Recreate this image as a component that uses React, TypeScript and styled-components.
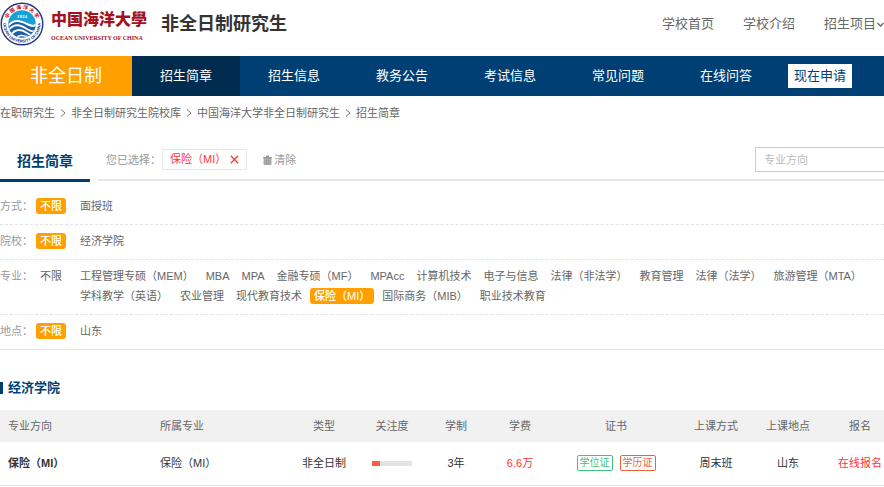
import React from "react";
import styled, { createGlobalStyle, css } from "styled-components";

const GlobalStyle = createGlobalStyle`
  *, *::before, *::after { box-sizing: border-box; }
  body {
    margin: 0;
    background: #fff;
    color: #333;
    font-family: "Liberation Sans", "Noto Sans CJK SC", sans-serif;
    font-size: 11px;
    line-height: 20px;
  }
  a { color: inherit; text-decoration: none; }
  button, input { font: inherit; }
`;

const Page = styled.div`
  width: 100%;
  overflow: hidden;
`;

const Header = styled.header`
  display: flex;
  align-items: center;
  height: 56px;
  padding-bottom: 8px;
`;

const Wordmark = styled.div`
  display: flex;
  flex-direction: column;
  margin-left: 6px;
  color: #a3121f;
  white-space: nowrap;
`;

const SchoolName = styled.span`
  font-size: 16px;
  font-weight: 900;
  line-height: 28px;
`;

const SchoolNameEn = styled.span`
  font-family: "Liberation Serif", serif;
  font-size: 6px;
  font-weight: 700;
  line-height: 8px;
`;

const SiteTitle = styled.h1`
  margin: 0 0 0 14px;
  font-size: 18px;
  font-weight: 700;
  white-space: nowrap;
`;

const TopLinks = styled.nav`
  display: flex;
  gap: 29px;
  margin-left: auto;
  color: #666;
  font-size: 13px;
  white-space: nowrap;
`;

const TopLink = styled.a`
  display: flex;
  align-items: center;
`;

const MainNav = styled.nav`
  display: flex;
  align-items: center;
  height: 40px;
  background: #003f73;
  color: #fff;
  font-size: 13px;
`;

const NavBrand = styled.a`
  width: 132px;
  background: #ff9f00;
  font-size: 18px;
  line-height: 40px;
  text-align: center;
`;

const NavItem = styled.a<{ $active?: boolean }>`
  width: 108px;
  line-height: 40px;
  text-align: center;
  background: ${(p) => (p.$active ? "#002c50" : "transparent")};
`;

const ApplyButton = styled.button`
  margin-left: 8px;
  padding: 0 6px;
  height: 24px;
  border: 0;
  background: #fff;
  color: #003f73;
  line-height: 24px;
  cursor: pointer;
`;

const Breadcrumb = styled.nav`
  display: flex;
  align-items: center;
  height: 34px;
  color: #666;
  white-space: nowrap;
`;

const Separator = styled.svg`
  width: 6px;
  height: 8px;
  margin: 0 5px;
`;

const FilterBar = styled.div`
  display: flex;
  gap: 8px;
  height: 52px;
  margin-bottom: 8px;
`;

const SectionTab = styled.h2`
  width: 90px;
  margin: 12px 0 0;
  border-bottom: 3px solid #003f73;
  color: #003f73;
  font-size: 14px;
  line-height: 38px;
  text-align: center;
`;

const Selection = styled.div`
  display: flex;
  flex: 1;
  align-items: center;
  margin-bottom: 1px;
  padding: 10px 0 0 8px;
  border-bottom: 2px solid #e8e8e8;
  color: #999;
`;

const SelectedTag = styled.button`
  display: flex;
  align-items: center;
  gap: 4px;
  height: 21px;
  margin-left: 1px;
  padding: 0 7px;
  border: 1px solid #e8e8e8;
  background: #fff;
  color: #f33;
  line-height: 19px;
  cursor: pointer;
`;

const ClearButton = styled.button`
  display: flex;
  align-items: center;
  gap: 2px;
  margin-left: 16px;
  padding: 0;
  border: 0;
  background: none;
  color: #999;
  cursor: pointer;
`;

const SearchInput = styled.input`
  width: 129px;
  height: 25px;
  margin-left: auto;
  padding: 0 8px;
  border: 1px solid #ccc;
  border-right: 0;
  border-radius: 0;
  outline: 0;
  color: #333;
  &::placeholder { color: #bbb; }
`;

const FilterRow = styled.div`
  display: flex;
  padding: 6px 0 8px;
  border-bottom: 1px dashed #e3e3e3;
  &:last-child { border-bottom-style: solid; }
`;

const FilterLabel = styled.span`
  flex: none;
  width: 36px;
  color: #999;
`;

const OptionList = styled.div`
  display: flex;
  flex-wrap: wrap;
  column-gap: 4px;
  margin-left: 10px;
`;

const Option = styled.a<{ $selected?: boolean }>`
  height: 16px;
  margin: 2px 0;
  padding: 0 4px;
  border-radius: 3px;
  color: #666;
  line-height: 16px;
  white-space: nowrap;
  ${(p) =>
    p.$selected &&
    css`
      background: #ff9f00;
      color: #fff;
      font-weight: 500;
    `}
`;

const GroupTitle = styled.h3`
  display: flex;
  align-items: center;
  gap: 5px;
  margin: 28px 0 12px;
  color: #003f73;
  font-size: 13px;
  line-height: 20px;
  &::before {
    content: "";
    width: 3px;
    height: 12px;
    background: #003f73;
  }
`;

const CourseTable = styled.table`
  width: 100%;
  table-layout: fixed;
  border-collapse: collapse;
  white-space: nowrap;
`;

const Col = styled.col<{ $width?: number }>`
  ${(p) => p.$width && `width: ${p.$width}px;`}
`;

const cell = css`
  padding: 0;
  text-align: center;
  &:nth-child(-n + 2) { padding-left: 8px; text-align: left; }
  &:last-child { padding-left: 12px; }
`;

const HeadCell = styled.th`
  ${cell}
  height: 32px;
  background: #f1f1f1;
  color: #666;
  font-weight: 400;
`;

const Cell = styled.td<{ $strong?: boolean; $red?: boolean }>`
  ${cell}
  height: 43px;
  border-bottom: 1px solid #e3e3e3;
  color: ${(p) => (p.$red ? "#f33" : "#333")};
  font-weight: ${(p) => (p.$strong ? 700 : 400)};
`;

const Meter = styled.div`
  width: 40px;
  height: 5px;
  margin: 0 auto;
  background: #e3e3e3;
`;

const MeterFill = styled.div`
  width: 20%;
  height: 100%;
  background: #f0643c;
`;

const Badges = styled.div`
  display: flex;
  justify-content: center;
  gap: 7px;
`;

const Badge = styled.span<{ $tone: "green" | "red" }>`
  width: 36px;
  height: 16px;
  border: 1px solid;
  border-radius: 2px;
  color: ${(p) => (p.$tone === "green" ? "#3dc47e" : "#f0603c")};
  font-size: 10px;
  line-height: 14px;
`;

const emblemChars = ["中", "国", "海", "洋", "大", "学"];

const Emblem = () => (
  <svg width="45" height="46" viewBox="0 0 45 46" role="img" aria-label="中国海洋大学校徽">
    <defs>
      <path id="ring-bottom" d="M3.4 23a18.6 18.6 0 0 0 37.2 0" />
      <clipPath id="disc"><circle cx="22" cy="23" r="13.6" /></clipPath>
    </defs>
    <circle cx="22" cy="23" r="20.8" fill="#fff" stroke="#24327e" strokeWidth="1.4" />
    <circle cx="22" cy="23" r="13.8" fill="#16a0d6" />
    <g clipPath="url(#disc)" fill="none" stroke="#fff">
      <path d="M5 27C13 16 22 17 38 28L38 40L5 40Z" fill="#1b5ea8" stroke="none" />
      <path d="M7 26C14 17 21 20 27 23S35 25 38 22" strokeWidth="2.2" />
      <path d="M7 31C14 21 21 24 27 28S34 30 38 28" strokeWidth="1.8" />
      <path d="M10 35C16 26 23 29 27 32S33 34 37 31" strokeWidth="1.8" />
      <path d="M16 37C21 32 25 36 31 36" strokeWidth="1.4" />
    </g>
    <text x="22" y="17" textAnchor="middle" fill="#fff" fontFamily="Liberation Serif, serif" fontSize="5" fontWeight="700">1924</text>
    <g fill="#d8262c" fontFamily="Noto Sans CJK SC, sans-serif" fontSize="5" fontWeight="900" textAnchor="middle">
      {emblemChars.map((char, i) => (
        <text key={char} x="22" y="8" transform={`rotate(${-60 + i * 24} 22 23)`}>{char}</text>
      ))}
    </g>
    <text fill="#24327e" fontFamily="Liberation Sans, sans-serif" fontSize="4" fontWeight="700">
      <textPath href="#ring-bottom" startOffset="50%" textAnchor="middle">OCEAN UNIVERSITY OF CHINA</textPath>
    </text>
  </svg>
);

const ChevronDown = () => (
  <svg width="8" height="8" viewBox="0 0 8 8" fill="none" stroke="#666" strokeWidth="1.3" aria-hidden="true">
    <path d="M1.5 3L4.5 6L7.5 3" />
  </svg>
);

const CrossIcon = () => (
  <svg width="9" height="9" viewBox="0 0 9 9" stroke="#f33" strokeWidth="1.3" aria-hidden="true">
    <path d="M.8 .8L8.2 8.2M8.2 .8L.8 8.2" />
  </svg>
);

const TrashIcon = () => (
  <svg width="9" height="10" viewBox="0 0 9 10" aria-hidden="true">
    <path d="M0 2H9V3.2H0ZM3 2V.5H6V2" fill="#999" />
    <path d="M1 3.5H8V9.5H1Z" fill="#b5b5b5" stroke="#999" strokeWidth=".8" />
    <path d="M3.3 4.5V9M5.7 4.5V9" stroke="#808080" strokeWidth=".8" />
  </svg>
);

const crumbs = ["在职研究生", "非全日制研究生院校库", "中国海洋大学非全日制研究生", "招生简章"];
const navItems = ["招生简章", "招生信息", "教务公告", "考试信息", "常见问题", "在线问答"];

const filters = [
  { label: "方式：", any: true, options: ["面授班"] },
  { label: "院校：", any: true, options: ["经济学院"] },
  {
    label: "专业：",
    any: false,
    options: [
      "工程管理专硕（MEM）", "MBA", "MPA", "金融专硕（MF）", "MPAcc", "计算机技术", "电子与信息",
      "法律（非法学）", "教育管理", "法律（法学）", "旅游管理（MTA）", "学科教学（英语）", "农业管理",
      "现代教育技术", "保险（MI）", "国际商务（MIB）", "职业技术教育",
    ],
  },
  { label: "地点：", any: true, options: ["山东"] },
];

const columns: { title: string; width?: number }[] = [
  { title: "专业方向" },
  { title: "所属专业", width: 136 },
  { title: "类型", width: 72 },
  { title: "关注度", width: 64 },
  { title: "学制", width: 64 },
  { title: "学费", width: 64 },
  { title: "证书", width: 128 },
  { title: "上课方式", width: 72 },
  { title: "上课地点", width: 72 },
  { title: "报名", width: 60 },
];

export default function App() {
  return (
    <>
      <GlobalStyle />
      <Page>
        <Header>
          <Emblem />
          <Wordmark>
            <SchoolName>中国海洋大學</SchoolName>
            <SchoolNameEn>OCEAN UNIVERSITY OF CHINA</SchoolNameEn>
          </Wordmark>
          <SiteTitle>非全日制研究生</SiteTitle>
          <TopLinks>
            <TopLink href="#">学校首页</TopLink>
            <TopLink href="#">学校介绍</TopLink>
            <TopLink href="#">招生项目<ChevronDown /></TopLink>
          </TopLinks>
        </Header>
        <MainNav>
          <NavBrand href="#">非全日制</NavBrand>
          {navItems.map((item, i) => (
            <NavItem key={item} href="#" $active={i === 0}>{item}</NavItem>
          ))}
          <ApplyButton type="button">现在申请</ApplyButton>
        </MainNav>
        <Breadcrumb>
          {crumbs.map((crumb, i) => (
            <React.Fragment key={crumb}>
              {i > 0 && (
                <Separator viewBox="0 0 6 8" fill="none" stroke="#777" aria-hidden="true">
                  <path d="M1 .5L5 4L1 7.5" />
                </Separator>
              )}
              <a href="#">{crumb}</a>
            </React.Fragment>
          ))}
        </Breadcrumb>
        <FilterBar>
          <SectionTab>招生简章</SectionTab>
          <Selection>
            <span>您已选择：</span>
            <SelectedTag type="button">保险（MI）<CrossIcon /></SelectedTag>
            <ClearButton type="button"><TrashIcon />清除</ClearButton>
            <SearchInput type="text" placeholder="专业方向" aria-label="专业方向" />
          </Selection>
        </FilterBar>
        <section>
          {filters.map((filter) => (
            <FilterRow key={filter.label}>
              <FilterLabel>{filter.label}</FilterLabel>
              <Option href="#" $selected={filter.any}>不限</Option>
              <OptionList>
                {filter.options.map((option) => (
                  <Option key={option} href="#" $selected={option === "保险（MI）"}>{option}</Option>
                ))}
              </OptionList>
            </FilterRow>
          ))}
        </section>
        <GroupTitle>经济学院</GroupTitle>
        <CourseTable>
          <colgroup>
            {columns.map((c) => <Col key={c.title} $width={c.width} />)}
          </colgroup>
          <thead>
            <tr>{columns.map((c) => <HeadCell key={c.title} scope="col">{c.title}</HeadCell>)}</tr>
          </thead>
          <tbody>
            <tr>
              <Cell $strong><a href="#">保险（MI）</a></Cell>
              <Cell>保险（MI）</Cell>
              <Cell>非全日制</Cell>
              <Cell><Meter><MeterFill /></Meter></Cell>
              <Cell>3年</Cell>
              <Cell $red>6.6万</Cell>
              <Cell>
                <Badges>
                  <Badge $tone="green">学位证</Badge>
                  <Badge $tone="red">学历证</Badge>
                </Badges>
              </Cell>
              <Cell>周末班</Cell>
              <Cell>山东</Cell>
              <Cell $red><a href="#">在线报名</a></Cell>
            </tr>
          </tbody>
        </CourseTable>
      </Page>
    </>
  );
}
